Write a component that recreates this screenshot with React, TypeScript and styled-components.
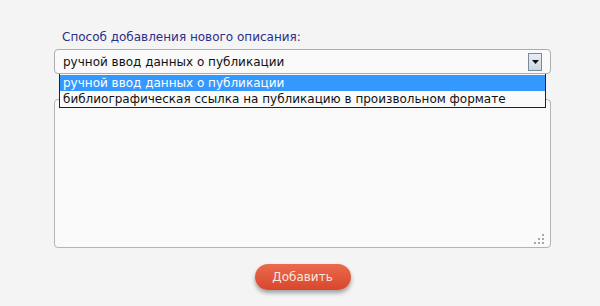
import styled, { createGlobalStyle } from 'styled-components';

const GlobalStyle = createGlobalStyle`
  html, body {
    margin: 0;
    padding: 0;
    background: #f4f4f4;
  }
  body {
    font-family: Tahoma, "DejaVu Sans", sans-serif;
  }
`;

const Page = styled.div`
  width: 600px;
  height: 306px;
  box-sizing: border-box;
  padding: 29px 49px 0 54px;
  display: flex;
  flex-direction: column;
`;

const Label = styled.div`
  margin-left: 8px;
  font-size: 12px;
  line-height: 16px;
  color: #2b2f86;
  margin-bottom: 4px;
`;

const SelectWrap = styled.div`
  position: relative;
`;

const SelectBox = styled.div`
  height: 25px;
  box-sizing: border-box;
  border: 1px solid #adadad;
  border-radius: 4px;
  background: #fafafa;
  display: flex;
  align-items: center;
  justify-content: space-between;
  padding: 0 8px 0 8px;
  font-size: 12px;
  color: #111;
`;

const ArrowButton = styled.div`
  width: 14px;
  height: 18px;
  box-sizing: border-box;
  border: 1px solid #7a8a99;
  background: linear-gradient(#e8eef4, #c9d6e2);
  display: flex;
  align-items: center;
  justify-content: center;
`;

const Options = styled.div`
  position: absolute;
  top: 25px;
  left: 5px;
  right: 5px;
  border: 1px solid #222;
  border-top: none;
  background: #fafafa;
  z-index: 2;
  padding-top: 1px;
`;

const Option = styled.div<{ $active?: boolean }>`
  height: 16px;
  line-height: 16px;
  padding-left: 3px;
  font-size: 12px;
  color: ${(p) => (p.$active ? '#fff' : '#111')};
  background: ${(p) => (p.$active ? '#3399ff' : 'transparent')};
  white-space: nowrap;
`;

const TextArea = styled.div`
  margin-top: 25px;
  height: 149px;
  box-sizing: border-box;
  border: 1px solid #b3b3b3;
  border-radius: 4px;
  background: #fafafa;
  position: relative;
`;

const Grip = styled.svg`
  position: absolute;
  right: 6px;
  bottom: 3px;
`;

const ButtonRow = styled.div`
  display: flex;
  justify-content: center;
  margin-top: 16px;
`;

const AddButton = styled.button`
  width: 96px;
  height: 26px;
  border: none;
  border-radius: 13px;
  background: linear-gradient(#ea6a4d, #d9472c);
  box-shadow: 0 3px 4px rgba(0, 0, 0, 0.35);
  color: #f7e6df;
  font-family: Tahoma, "DejaVu Sans", sans-serif;
  font-size: 12px;
  padding: 0;
`;

export default function App() {
  return (
    <>
      <GlobalStyle />
      <Page>
        <Label>Способ добавления нового описания:</Label>
        <SelectWrap>
          <SelectBox>
            <span>ручной ввод данных о публикации</span>
            <ArrowButton>
              <svg width="7" height="4" viewBox="0 0 7 4">
                <path d="M0 0h7L3.5 4z" fill="#111" />
              </svg>
            </ArrowButton>
          </SelectBox>
          <Options>
            <Option $active>ручной ввод данных о публикации</Option>
            <Option>библиографическая ссылка на публикацию в произвольном формате</Option>
          </Options>
        </SelectWrap>
        <TextArea>
          <Grip width="10" height="10" viewBox="0 0 10 10">
            <g fill="#a8a8a8">
              <rect x="8" y="0" width="2" height="2" />
              <rect x="4" y="4" width="2" height="2" />
              <rect x="8" y="4" width="2" height="2" />
              <rect x="0" y="8" width="2" height="2" />
              <rect x="4" y="8" width="2" height="2" />
              <rect x="8" y="8" width="2" height="2" />
            </g>
          </Grip>
        </TextArea>
        <ButtonRow>
          <AddButton>Добавить</AddButton>
        </ButtonRow>
      </Page>
    </>
  );
}
